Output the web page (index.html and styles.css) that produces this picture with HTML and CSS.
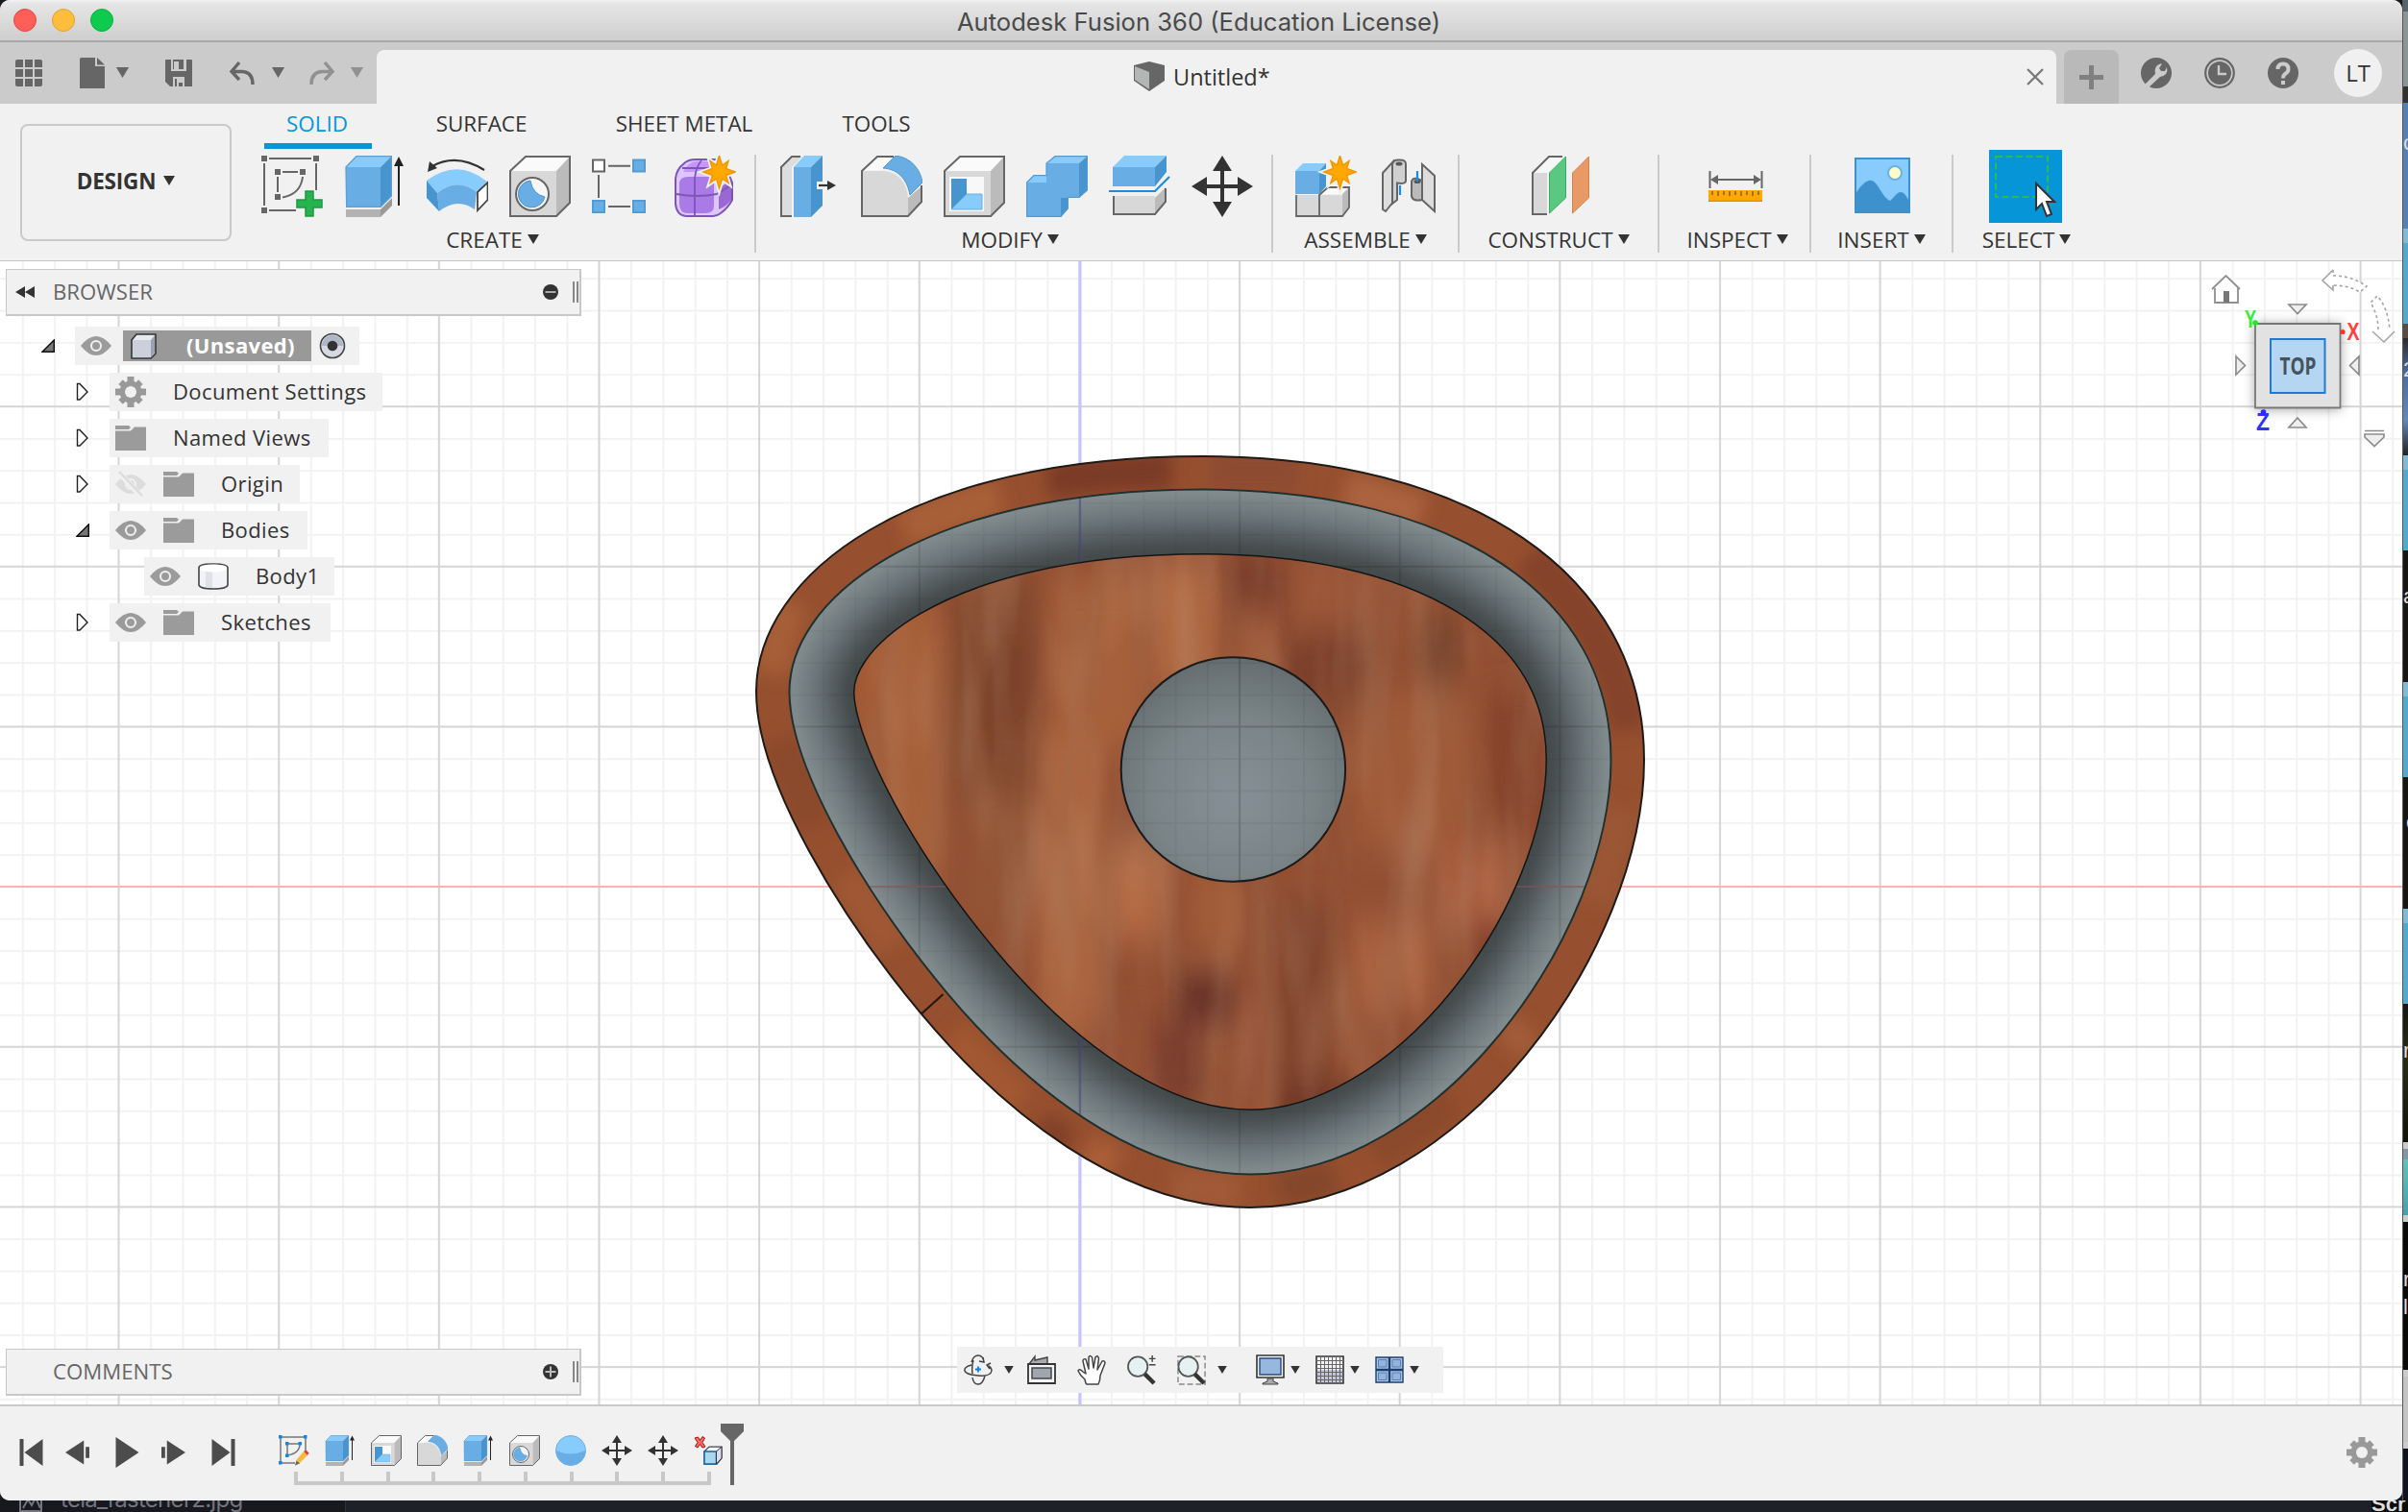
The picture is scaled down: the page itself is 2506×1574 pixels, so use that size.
FILE: index.html
```html
<!DOCTYPE html>
<html lang="en">
<head>
<meta charset="utf-8">
<title>Autodesk Fusion 360</title>
<link rel="stylesheet" href="styles.css">
</head>
<body>
<svg class="defs" width="0" height="0">
  <defs>
    <symbol id="i-sketch" viewBox="0 0 64 64">
      <path d="M8 3H52M3 8V52M57 8V36M8 57H36M22 17H38M17 22V38M43 22Q41 40 22 43.500" fill="none" stroke="#666" stroke-width="2"/>
      <path d="M0 0h6v6H0zM54 0h6v6h-6zM0 54h6v6H0zM14 14h6v6h-6zM40 14h6v6h-6zM14 40h6v6h-6z" fill="#666"/>
      <path d="M46 37h8v9h9v8h-9v9h-8v-9h-9v-8h9z" fill="#27b34f" stroke="#1b9a3f" stroke-width="1.500"/>
    </symbol>
    <symbol id="i-tsketch" viewBox="0 0 64 64">
      <path d="M4 4H56V36M4 4V58H34M18 18H44M18 18V42M44 18Q44 38 18 42" fill="none" stroke="#777" stroke-width="3"/>
      <path d="M0 0h7v7H0zM52 0h7v7h-7zM0 54h7v7H0zM14 14h7v7h-7zM41 14h7v7h-7zM14 39h7v7h-7z" fill="#1287e0"/>
      <path d="M34 63L38 50 52 34 60 42 44 58z" fill="#f5ba3f"/><path d="M34 63l3-10 7 6z" fill="#666"/><path d="M52 34l5-3 6 6-3 5z" fill="#e8372c"/>
    </symbol>
    <symbol id="i-extrude" viewBox="0 0 64 64">
      <path d="M2 12H38V54H2z" fill="#68aee4"/><path d="M2 12L13 0H50L38 12z" fill="#88cbfd"/><path d="M38 12L50 0V42L38 54z" fill="#4794ce"/>
      <path d="M2 12L13 .7H49.300V42L38 53.300H2.700z" fill="none" stroke="#5c9fd3" stroke-width="1.300"/>
      <path d="M2 56H38V64H2z" fill="#b2b2b2"/><path d="M38 56L50 44V52L38 64z" fill="#999"/>
      <path d="M57 8V52" stroke="#222" stroke-width="2"/><path d="M52 11L57 1l5 10z" fill="#222"/>
    </symbol>
    <symbol id="i-revolve" viewBox="0 0 64 64">
      <path d="M6 11Q31-3 60 15" fill="none" stroke="#333" stroke-width="2.200"/><path d="M1 17L3 6l8 7z" fill="#333"/>
      <path d="M0 26Q32 2 63 27L52 38Q32 22 11 39z" fill="#88cbfd"/>
      <path d="M11 39Q32 22 52 38L50 56Q32 43 13 58z" fill="#68aee4"/><path d="M0 26L11 39l2 19L0 44z" fill="#4794ce"/>
      <path d="M53 38L63.500 28V46L53 57z" fill="#fff" stroke="#444" stroke-width="1.800"/>
    </symbol>
    <symbol id="i-box" viewBox="0 0 64 64">
      <path d="M1 16H49V63H1z" fill="#d8d8d8"/><path d="M1 16L17 1H63L49 16z" fill="#fafafa"/><path d="M49 16L63 1V49L49 63z" fill="#bbb"/>
      <path d="M1 16L17 1H63V49L49 63H1z" fill="none" stroke="#666" stroke-width="2"/>
    </symbol>
    <symbol id="i-hole" viewBox="0 0 64 64">
      <use href="#i-box"/><circle cx="24" cy="40" r="17" fill="#f6f6f6" stroke="#666" stroke-width="2"/>
      <path d="M22 26Q24 40 37 43A14 14 0 1 1 22 26z" fill="#68aee4" stroke="#4b93cb"/>
    </symbol>
    <symbol id="i-pattern" viewBox="0 0 64 64">
      <path d="M17 10.700H40M17 53H40M7 20V44" stroke="#666" stroke-width="2"/>
      <path d="M1 4.500h12v12H1z" fill="#fff" stroke="#666" stroke-width="2"/>
      <path d="M43 4.500h12v12H43zM1 47h12v12H1zM43 47h12v12H43z" fill="#68aee4" stroke="#529bd3" stroke-width="2"/>
    </symbol>
    <symbol id="i-star" viewBox="0 0 64 64">
      <path d="M46.500 0L49.500 10 56 5.500 53.500 13.500 63 17 53.500 20.500 56 28.500 49.500 24 46.500 34 43.500 24 37 28.500 39.500 20.500 30 17 39.500 13.500 37 5.500 43.500 10z" fill="#ffa800" stroke="#ee9700" stroke-width="1.500"/>
    </symbol>
    <symbol id="i-form" viewBox="0 0 64 64">
      <path d="M1 24Q2 14 10 8Q14 4 22 4H46Q52 8 60 28V46Q56 54 48 60Q44 63 40 63H12Q2 62 1 50z" fill="#dcc6fb" stroke="#7d55b8" stroke-width="2"/>
      <path d="M5 28Q6 22 14 22H34Q41 22 41 30V52Q41 60 32 60H14Q5 60 5 50z" fill="#aa7be6"/>
      <path d="M9 17Q14 7 22 6H42L35 17z" fill="#c597fb"/><path d="M46 38Q46 32 59 26V46Q54 53 46 56z" fill="#9a68d3"/>
      <path d="M2 40Q24 44 44 40L60 30M21 62V24Q22 12 28 5M8 13H40" fill="none" stroke="#7d55b8" stroke-width="1.800"/>
      <path d="M46.500 0L49.500 10 56 5.500 53.500 13.500 63 17 53.500 20.500 56 28.500 49.500 24 46.500 34 43.500 24 37 28.500 39.500 20.500 30 17 39.500 13.500 37 5.500 43.500 10z" fill="#f1f1f1" stroke="#f1f1f1" stroke-width="5"/>
      <use href="#i-star"/>
    </symbol>
    <symbol id="i-press" viewBox="0 0 64 64">
      <path d="M3 12L14 1H25L14 12V63H3z" fill="#ddd"/><path d="M14 63H3V12L14 1H23" fill="none" stroke="#666" stroke-width="2"/>
      <path d="M16 12H34V64H16z" fill="#68aee4"/><path d="M16 12L27 0H46L34 12z" fill="#88cbfd"/><path d="M34 12L46 0V52L34 64z" fill="#4794ce"/>
      <path d="M40 27h11v-4l12 8-12 8v-4H40z" fill="#f1f1f1"/><path d="M42 31h12" stroke="#333" stroke-width="2.200"/><path d="M51 26l9 5-9 5z" fill="#333"/>
    </symbol>
    <symbol id="i-fillet" viewBox="0 0 64 64">
      <path d="M1 16L17 1H34L22 15z" fill="#fafafa"/><path d="M49 44L63 32V48L49 63z" fill="#bbb"/>
      <path d="M1 16H22C38 16 48 28 49 44V63H1z" fill="#d8d8d8"/><path d="M34 1H17L1 16V63H49L63 48V31" fill="none" stroke="#666" stroke-width="2"/>
      <path d="M23 13L36 0C52 2 62 14 64 28L51 41C48 24 38 14 23 13z" fill="#68aee4" stroke="#5299d0"/>
    </symbol>
    <symbol id="i-shell" viewBox="0 0 64 64">
      <use href="#i-box"/><path d="M6 22H42V58H6z" fill="#f8f8f8"/><path d="M8 24H24V40L8 56z" fill="#4794ce"/><path d="M24 40H40V56H8z" fill="#88cbfd" stroke="#68aee4"/>
    </symbol>
    <symbol id="i-combine" viewBox="0 0 64 64">
      <path d="M0 28L8 20H21V8H55V44H36V64H0z" fill="#68aee4"/><path d="M0 28L8 20H21V28zM21 8L30 0H64L55 8z" fill="#88cbfd"/>
      <path d="M55 8L64 0V36L55 44zM36 44H44V55L36 64z" fill="#4794ce"/>
      <path d="M.7 28L8 20.700H21V8L30 .7H63.300V36L55 43.300H43.300V55L36 63.300H.7z" fill="none" stroke="#559bd2" stroke-width="1.200"/>
    </symbol>
    <symbol id="i-split" viewBox="0 0 64 64">
      <path d="M4 12H48V32H4z" fill="#68aee4"/><path d="M4 12L16 0H60L48 12z" fill="#88cbfd"/><path d="M48 12L60 0V17L48 32z" fill="#4794ce"/>
      <path d="M0 37H48L63 22" fill="none" stroke="#1a8de0" stroke-width="2.200"/>
      <path d="M5 42H48V61H5z" fill="#d8d8d8"/><path d="M48 44L59 33V48L48 61z" fill="#bbb"/><path d="M5 42V61H48L59 48V34" fill="none" stroke="#666" stroke-width="2"/>
    </symbol>
    <symbol id="i-move" viewBox="0 0 64 64">
      <path d="M32 10V54M10 32H54" stroke="#333" stroke-width="4"/><path d="M32 0L42 16H22zM32 64L42 48H22zM0 32L16 22V42zM64 32L48 22V42z" fill="#333"/>
    </symbol>
    <symbol id="i-assemble" viewBox="0 0 64 64">
      <path d="M0 16H25V40H0z" fill="#68aee4"/><path d="M0 16L8 8H32L25 16z" fill="#88cbfd"/><path d="M25 16L32 8V32L25 40z" fill="#4794ce"/>
      <path d="M1 41H49V63H1z" fill="#d8d8d8"/><path d="M26 40L34 33H55L49 40z" fill="#fafafa"/><path d="M49 40L56 33V54L49 63z" fill="#bbb"/>
      <path d="M1 41V63H49L56 54V33H34L25 41V63" fill="none" stroke="#666" stroke-width="1.800"/>
      <path d="M46.500 0L49.500 10 56 5.500 53.500 13.500 63 17 53.500 20.500 56 28.500 49.500 24 46.500 34 43.500 24 37 28.500 39.500 20.500 30 17 39.500 13.500 37 5.500 43.500 10z" fill="#f1f1f1" stroke="#f1f1f1" stroke-width="5"/><use href="#i-star"/>
    </symbol>
    <symbol id="i-joint" viewBox="0 0 64 64">
      <path d="M5 18L16 6V48L8 58 5 56z" fill="#ddd" stroke="#666" stroke-width="2"/>
      <path d="M15 9Q16 4 22 4.500Q29 4 29 9V26Q29 30 20 28.500V46L15 50z" fill="#d0d0d0" stroke="#666" stroke-width="2"/><ellipse cx="22" cy="8.500" rx="3.500" ry="2" fill="#555"/>
      <path d="M46 9L59 21V58L46 46z" fill="#ddd" stroke="#666" stroke-width="2"/>
      <path d="M35 27Q36 23 41 24L46 26V46Q36 48 35 42z" fill="#bbb" stroke="#666" stroke-width="2"/><ellipse cx="41" cy="27" rx="3.500" ry="2" fill="#555"/>
      <path d="M23 31V41M41 16V27" stroke="#1a8de0" stroke-width="2.200"/>
    </symbol>
    <symbol id="i-construct" viewBox="0 0 64 64">
      <path d="M3 18L20 1H36L18 18V61H3z" fill="#f6f6f6"/><path d="M3 18H18V61H3z" fill="#d8d8d8"/><path d="M18 61H3V18L20 1H34" fill="none" stroke="#666" stroke-width="2"/>
      <path d="M20.500 18L37.500 1V44L20.500 60z" fill="#5bc881" stroke="#3cae64"/><path d="M44.500 18L61.500 1V44L44.500 60z" fill="#e79a66" stroke="#d18450"/>
    </symbol>
    <symbol id="i-inspect" viewBox="0 0 64 64">
      <path d="M5.500 16V34M59.500 16V34M9 25H56" stroke="#666" stroke-width="2"/><path d="M6 25l8-5v10zM59 25l-8-5v10z" fill="#666"/>
      <path d="M4 36H60V48H4z" fill="#ffa800"/><path d="M4 46.500H60V48H4z" fill="#e29100"/><path d="M8 37v4M14 37v5M20 37v4M26 37v5M32 37v4M38 37v5M44 37v4M50 37v5M56 37v4" stroke="#8a6420" stroke-width="1.600"/>
    </symbol>
    <symbol id="i-insert" viewBox="0 0 64 64">
      <path d="M4 3H60V59H4z" fill="#88cbfd" stroke="#3d91cd" stroke-width="2"/><circle cx="45" cy="18" r="7" fill="#fdfbc8" stroke="#6cb2e8" stroke-width="2"/>
      <path d="M4 40C10 30 16 25 21 26C28 28 32 44 40 47C44 44 47 38 51 38C55 38 58 44 60 48V59H4z" fill="#3d91cd"/>
    </symbol>
    <symbol id="i-sphere" viewBox="0 0 64 64">
      <circle cx="32" cy="32" r="31" fill="#88cbfd"/><path d="M1 32Q32 46 63 32A31 31 0 0 1 1 32z" fill="#68aee4"/><circle cx="32" cy="32" r="31" fill="none" stroke="#6db0e4" stroke-width="2"/>
    </symbol>
    <symbol id="i-remove" viewBox="0 0 64 64">
      <path d="M2 6l7-2 4 7 5-8 5 3-5 9 6 9-6 2-5-7-5 7-5-3 5-8z" fill="#f46a60" stroke="#a8120c" stroke-width="2"/>
      <path d="M22 34L32 24H58V48L48 60H22z" fill="#f6f6f6" stroke="#445" stroke-width="2.500"/><path d="M22 34H47V60H22z" fill="#a9d7ee" stroke="#1766a5" stroke-width="3"/><path d="M47 34L58 24V48L47 60z" fill="#dde" stroke="#334" stroke-width="2"/>
    </symbol>
    <symbol id="i-eye" viewBox="0 0 32 20">
      <path d="M0 10Q8 0 16 0T32 10Q24 20 16 20T0 10z" fill="#9b9b9b"/><circle cx="16" cy="10" r="5" fill="none" stroke="#f1f1f1" stroke-width="2"/>
    </symbol>
    <symbol id="i-folder" viewBox="0 0 32 26">
      <path d="M0 0H14L16 2 14 4H0zM0 5.500H16L20 1.500H32V26H0z" fill="#9b9b9b"/>
    </symbol>
    <symbol id="i-gear" viewBox="0 0 32 32">
      <g fill="#999"><path d="M12.500 0h7v32h-7zM0 12.500h32v7H0z"/><path d="M12.500 0h7v32h-7zM0 12.500h32v7H0z" transform="rotate(45 16 16) translate(1.300 1.300) scale(.92)"/><circle cx="16" cy="16" r="11.500"/></g><circle class="gear-hole" cx="16" cy="16" r="6"/>
    </symbol>
    <symbol id="i-open" viewBox="0 0 14 14"><path d="M1 13.300L13.300 1V13.300z" fill="#777" stroke="#111" stroke-width="1.500"/></symbol>
    <symbol id="i-closed" viewBox="0 0 14 20"><path d="M1.500 1.500H4L12 10 4 18H1.500z" fill="#fff" stroke="#222" stroke-width="1.400"/></symbol>
    <symbol id="i-down" viewBox="0 0 12 10"><path d="M0 0H12L6 10z" fill="currentColor"/></symbol>
  </defs>
</svg>

<div class="desktop">
  <div class="window">
    <header class="titlebar">
      <div class="lights"><i class="red"></i><i class="yellow"></i><i class="green"></i></div>
      <span class="title">Autodesk Fusion 360 (Education License)</span>
    </header>

    <div class="appbar">
      <div class="quick">
        <svg class="q-grid" viewBox="0 0 28 28"><path d="M0 2Q0 0 2 0H8V8H0zM10 0H18V8H10zM20 0H26Q28 0 28 2V8H20zM0 10H8V18H0zM10 10H18V18H10zM20 10H28V18H20zM0 20H8V28H2Q0 28 0 26zM10 20H18V28H10zM20 20H28V26Q28 28 26 28H20z" fill="#666"/></svg>
        <svg class="q-doc" viewBox="0 0 26 32"><path d="M0 1.500Q0 0 1.500 0H16V9H26V32H0zM18 0L26 7.500H18z" fill="#666"/></svg>
        <svg class="q-arrow"><use href="#i-down"/></svg>
        <svg class="q-save" viewBox="0 0 28 28"><path d="M0 1Q0 0 1 0H27Q28 0 28 1V28H5L0 23z" fill="#666"/><path d="M6 0V12H22V0H19V10H14V2H9V10H8V0zM8 28V18H20V28H18V24H14V28H12V20H10V28z" fill="#cbcbcb"/></svg>
        <svg class="q-undo" viewBox="0 0 27 25"><path d="M10 1L2 10.500 10 19M2 10.500H13Q24 11 24 24" fill="none" stroke="#666" stroke-width="3.400"/></svg>
        <svg class="q-arrow"><use href="#i-down"/></svg>
        <svg class="q-redo" viewBox="0 0 27 25"><path d="M17 1L25 10.500 17 19M25 10.500H14Q3 11 3 24" fill="none" stroke="#919191" stroke-width="3.400"/></svg>
        <svg class="q-arrow dim"><use href="#i-down"/></svg>
      </div>
      <div class="doc-tab">
        <svg class="cube" viewBox="0 0 32 32"><path d="M0 4L16 0 32 4V20L16 31 0 20z" fill="#666"/><path d="M1 5L16 11V29L1 19z" fill="#b4b6b6"/></svg>
        <span>Untitled*</span>
        <svg class="close" viewBox="0 0 18 18"><path d="M1 1L17 17M17 1L1 17" stroke="#777" stroke-width="2.200"/></svg>
      </div>
      <div class="new-tab"><svg viewBox="0 0 25 25"><path d="M12.500 0V25M0 12.500H25" stroke="#808080" stroke-width="5"/></svg></div>
      <div class="account">
        <svg viewBox="0 0 32 32"><circle cx="16" cy="16" r="16" fill="#666"/><path d="M3 29L15 17Q13 9 20 6.500L22 6.500 19 11 21 14 25 14 27 10Q29 18 20 20L7 32z" fill="#cbcbcb"/></svg>
        <svg viewBox="0 0 32 32"><circle cx="16" cy="16" r="14.800" fill="none" stroke="#666" stroke-width="2.200"/><circle cx="16" cy="16" r="12" fill="#666"/><path d="M15 8V17H23" fill="none" stroke="#cbcbcb" stroke-width="2.400"/></svg>
        <svg viewBox="0 0 32 32"><circle cx="16" cy="16" r="16" fill="#666"/><path d="M10.500 12Q10.500 6.500 16 6.500T21.500 12Q21.500 15 18 17Q16 18.500 16 21.500" fill="none" stroke="#cbcbcb" stroke-width="4"/><path d="M14 24h4v4h-4z" fill="#cbcbcb"/></svg>
        <span class="avatar">LT</span>
      </div>
    </div>

    <div class="ribbon">
      <button class="design">DESIGN<svg class="dd"><use href="#i-down"/></svg></button>
      <div class="ribbon-main">
        <nav class="tabs"><span class="tab t-solid">SOLID</span><span class="tab t-surface">SURFACE</span><span class="tab t-sheet">SHEET METAL</span><span class="tab t-tools">TOOLS</span></nav>
        <div class="groups">
          <section class="group g-create"><div class="icons"><svg><use href="#i-sketch"/></svg><svg><use href="#i-extrude"/></svg><svg><use href="#i-revolve"/></svg><svg><use href="#i-hole"/></svg><svg><use href="#i-pattern"/></svg><svg><use href="#i-form"/></svg></div><div class="label">CREATE<svg class="dd"><use href="#i-down"/></svg></div></section>
          <section class="group g-modify"><div class="icons"><svg><use href="#i-press"/></svg><svg><use href="#i-fillet"/></svg><svg><use href="#i-shell"/></svg><svg><use href="#i-combine"/></svg><svg><use href="#i-split"/></svg><svg><use href="#i-move"/></svg></div><div class="label">MODIFY<svg class="dd"><use href="#i-down"/></svg></div></section>
          <section class="group g-assemble"><div class="icons"><svg><use href="#i-assemble"/></svg><svg><use href="#i-joint"/></svg></div><div class="label">ASSEMBLE<svg class="dd"><use href="#i-down"/></svg></div></section>
          <section class="group g-construct"><div class="icons"><svg><use href="#i-construct"/></svg></div><div class="label">CONSTRUCT<svg class="dd"><use href="#i-down"/></svg></div></section>
          <section class="group g-inspect"><div class="icons"><svg><use href="#i-inspect"/></svg></div><div class="label">INSPECT<svg class="dd"><use href="#i-down"/></svg></div></section>
          <section class="group g-insert"><div class="icons"><svg><use href="#i-insert"/></svg></div><div class="label">INSERT<svg class="dd"><use href="#i-down"/></svg></div></section>
          <section class="group g-select"><div class="icons"><svg class="select" viewBox="0 0 76 76"><path d="M0 0H76V76H0z" fill="#0696d7"/><path d="M7 7H61V49H7z" fill="none" stroke="#2dbb4e" stroke-width="2" stroke-dasharray="7 3.500"/><path d="M49 35V62L55 56 60 69 65 67 60 54H68z" fill="#fff" stroke="#333" stroke-width="2"/></svg></div><div class="label">SELECT<svg class="dd"><use href="#i-down"/></svg></div></section>
        </div>
      </div>
    </div>

    <main class="canvas">
      <svg class="scene" viewBox="0 272 2500 1190">
        <defs>
          <pattern id="minor" x="1122.700" y="922.500" width="33.330" height="33.330" patternUnits="userSpaceOnUse"><path d="M0 0H33.330V2H0zM0 0H2V33.330H0z" fill="#000" fill-opacity=".05"/></pattern>
          <pattern id="major" x="1122.300" y="922" width="166.640" height="166.640" patternUnits="userSpaceOnUse"><path d="M0 0H166.640V2H0zM0 0H2V166.640H0z" fill="#000" fill-opacity=".12"/></pattern>
          <path id="outline" d="M1252 475C1527 475 1711 596 1711 791C1711 988 1520 1257 1301 1257C1165 1257 1042 1155 958.800 1055.400C875.500 955.700 787 813 787 720C787 598 947 475 1252 475z"/>
          <clipPath id="body-clip"><use href="#outline"/></clipPath>
          <mask id="ring-mask" maskUnits="userSpaceOnUse" x="700" y="400" width="1100" height="950"><use href="#outline" fill="none" stroke="#fff" stroke-width="202"/></mask>
          <mask id="rim-mask" maskUnits="userSpaceOnUse" x="700" y="400" width="1100" height="950"><use href="#outline" fill="none" stroke="#fff" stroke-width="67"/></mask>
          <filter id="soft" x="-20%" y="-20%" width="140%" height="140%"><feGaussianBlur stdDeviation="4"/></filter>
          <filter id="rim-soft" filterUnits="userSpaceOnUse" x="700" y="400" width="1100" height="950"><feGaussianBlur stdDeviation="9"/></filter>
          <filter id="smudge" filterUnits="userSpaceOnUse" x="700" y="400" width="1100" height="950"><feGaussianBlur stdDeviation="10 18"/></filter>
          <filter id="grain" x="0" y="0" width="100%" height="100%"><feTurbulence type="fractalNoise" baseFrequency=".03 .005" numOctaves="3" seed="8"/><feColorMatrix values="0 0 0 0 .34  0 0 0 0 .17  0 0 0 0 .10  2.600 0 0 0 -1.100"/></filter>
          <filter id="glow" x="0" y="0" width="100%" height="100%"><feTurbulence type="fractalNoise" baseFrequency=".024 .006" numOctaves="2" seed="23"/><feColorMatrix values="0 0 0 0 .75  0 0 0 0 .47  0 0 0 0 .29  2 0 0 0 -.900"/></filter>
          <radialGradient id="disc" cx=".5" cy=".62" r=".64"><stop offset="0" stop-color="#858f96"/><stop offset=".55" stop-color="#7b8588"/><stop offset="1" stop-color="#636b6d"/></radialGradient>
          <filter id="shadow" x="-30%" y="-30%" width="160%" height="160%"><feDropShadow dx="0" dy="1" stdDeviation="6" flood-opacity=".35"/></filter>
        </defs>
        <path d="M0 272H2500V1462H0z" fill="#fff"/>
        <path d="M0 272H2500V1462H0z" fill="url(#minor)"/>
        <path d="M0 272H2500V1462H0z" fill="url(#major)"/>
        <path d="M0 923H2500" stroke="#ffb0b0" stroke-width="2"/>
        <path d="M1124 272V1462" stroke="#c6c4fb" stroke-width="3"/>

        <g clip-path="url(#body-clip)">
          <path d="M780 470H1720V1260H780z" fill="#935033"/>
          <g filter="url(#smudge)">
            <path d="M890 620H975V950H890z" fill="#a45d38"/>
            <path d="M960 650H982V900H960z" fill="#a8643c"/>
            <path d="M990 600H1080V830H990z" fill="#834a2e"/>
            <path d="M1020 660H1070V770H1020z" fill="#7b422a"/>
            <path d="M1095 600H1190V780H1095z" fill="#a6613b"/>
            <path d="M1100 820H1135V900H1100z" fill="#b36c45"/>
            <path d="M1200 590H1265V720H1200z" fill="#b0673f"/>
            <path d="M1275 575H1335V640H1275z" fill="#7c3d2a"/>
            <path d="M1290 640H1325V710H1290z" fill="#a35a37"/>
            <path d="M1335 660H1425V740H1335z" fill="#7d3f29"/>
            <path d="M1350 580H1440V650H1350z" fill="#9c5637"/>
            <path d="M1475 640H1520V710H1475z" fill="#78432a"/>
            <path d="M1410 720H1530V880H1410z" fill="#9f5a37"/>
            <path d="M1550 720H1630V860H1550z" fill="#86422a"/>
            <path d="M1500 880H1580V960H1500z" fill="#a65a3b"/>
            <path d="M1535 960H1600V1060H1535z" fill="#803c29"/>
            <path d="M1080 760H1150V1090H1080z" fill="#aa6540"/>
            <path d="M1010 830H1070V960H1010z" fill="#935435"/>
            <path d="M1160 880H1215V980H1160z" fill="#b0663f"/>
            <path d="M1240 900H1290V990H1240z" fill="#a05b38"/>
            <path d="M1225 1015H1285V1065H1225z" fill="#5f2c20"/>
            <path d="M1200 1060H1250V1150H1200z" fill="#7a3a2a"/>
            <path d="M1330 940H1385V1200H1330z" fill="#81442d"/>
            <path d="M1295 1030H1320V1130H1295z" fill="#98533a"/>
            <path d="M1410 960H1490V1050H1410z" fill="#a9623f"/>
            <path d="M1330 1130H1410V1220H1330z" fill="#6f3728"/>
            <path d="M1130 1060H1195V1150H1130z" fill="#955136"/>
          </g>
          <path d="M780 470H1720V1260H780z" filter="url(#grain)" opacity=".28"/>
          <path d="M780 470H1720V1260H780z" filter="url(#glow)" opacity=".22"/>
          <use href="#outline" fill="none" stroke="#141414" stroke-width="205"/>
          <g mask="url(#ring-mask)">
            <path d="M780 470H1720V1260H780z" fill="#434a4b"/>
            <g fill="none" filter="url(#soft)">
              <use href="#outline" stroke="#474e50" stroke-width="192"/>
              <use href="#outline" stroke="#4d5456" stroke-width="180"/>
              <use href="#outline" stroke="#545c5e" stroke-width="168"/>
              <use href="#outline" stroke="#5b6466" stroke-width="156"/>
              <use href="#outline" stroke="#626b6e" stroke-width="144"/>
              <use href="#outline" stroke="#697376" stroke-width="132"/>
              <use href="#outline" stroke="#70797c" stroke-width="120"/>
              <use href="#outline" stroke="#768083" stroke-width="106"/>
              <use href="#outline" stroke="#7c8689" stroke-width="92"/>
              <use href="#outline" stroke="#818c8f" stroke-width="80"/>
            </g>
            <g opacity=".7"><path d="M780 470H1720V1260H780z" fill="url(#minor)"/><path d="M780 470H1720V1260H780z" fill="url(#major)"/></g>
            <path d="M1124.200 470V1260" stroke="#46489a" stroke-width="2" opacity=".5"/><path d="M780 923H1720" stroke="#9a5a5c" stroke-width="2" opacity=".5"/>
          </g>
          <use href="#outline" fill="none" stroke="#20302f" stroke-width="71"/>
          <use href="#outline" fill="none" stroke="#96502f" stroke-width="67"/>
          <g mask="url(#rim-mask)">
            <g filter="url(#rim-soft)" fill="none" stroke-width="40"><path d="M1090 500Q1150 490 1220 490" stroke="#7a3b27"/><path d="M1260 491H1350" stroke="#8d4c30"/><path d="M940 550L1040 515" stroke="#a86039"/><path d="M1400 510L1480 535" stroke="#ab643f"/><path d="M1590 580Q1680 660 1695 760" stroke="#84432a"/><path d="M820 625L800 700" stroke="#a65f38"/><path d="M810 770L850 860" stroke="#8a482c"/><path d="M880 910L930 985" stroke="#9f5935"/><path d="M990 1080L1060 1150" stroke="#a35833"/><path d="M1080 1175L1110 1195" stroke="#803f28"/><path d="M1130 1200L1160 1215" stroke="#aa5f39"/><path d="M1220 1235L1290 1242" stroke="#a05a37"/><path d="M1330 1240L1390 1225" stroke="#84462b"/><path d="M1430 1200L1510 1145" stroke="#8a4a2c"/><path d="M1570 1090L1590 1070" stroke="#a35d3a"/><path d="M1660 940L1690 840" stroke="#9a5635"/></g>
          </g>
        </g>
        <use href="#outline" fill="none" stroke="#1d1a18" stroke-width="2"/>
        <path d="M958.800 1055.400L981.500 1035" stroke="#201510" stroke-width="2"/>
        <circle cx="1283.400" cy="801" r="116.700" fill="url(#disc)"/><circle cx="1283.400" cy="801" r="116.700" fill="url(#minor)"/><circle cx="1283.400" cy="801" r="116.700" fill="url(#major)"/>
        <circle cx="1283.400" cy="801" r="116.700" fill="none" stroke="#1a1a1a" stroke-width="2"/>

        <g class="viewcube">
          <path d="M2302 301L2316.500 287 2331 301M2305 300V315H2329V300" fill="#fff" stroke="#909090" stroke-width="1.800"/><path d="M2314 303H2320V315H2314z" fill="#777"/>
          <path d="M2347 337H2435.500V424.500H2347z" fill="#e2e2e2" stroke="#777" stroke-width="1.800" filter="url(#shadow)"/>
          <path d="M2363 353H2419.500V409H2363z" fill="#b4d6f2" stroke="#2179d0" stroke-width="2"/>
          <text x="2372.500" y="389.500" class="vc-top" textLength="38" lengthAdjust="spacingAndGlyphs">TOP</text>
          <text x="2336" y="341" class="vc-axis vc-y" textLength="12" lengthAdjust="spacingAndGlyphs">Y</text><circle cx="2347" cy="336" r="2.800" fill="#18f018"/>
          <text x="2442.500" y="353.500" class="vc-axis vc-x" textLength="13" lengthAdjust="spacingAndGlyphs">X</text><circle cx="2438" cy="345.500" r="2.600" fill="#ff3030"/>
          <text x="2348" y="447.500" class="vc-axis vc-z" textLength="14" lengthAdjust="spacingAndGlyphs">Z</text><circle cx="2355.500" cy="429" r="2.800" fill="#2828ff"/>
          <g fill="#eee" stroke="#8c8c8c" stroke-width="1.700"><path d="M2382 317H2400L2391 326.500zM2382 445H2400L2391 435zM2327 371V390L2336.500 380.500zM2455 371V390L2445.500 380.500z"/><path d="M2461 448.500H2481M2461 452H2481V455L2471 464.500 2461 455z"/></g>
          <g fill="#fff" stroke="#a5a5a5" stroke-width="1.600"><path d="M2428 281L2417 292 2428 302V297"/><path d="M2428 281V287Q2447 287 2463 298L2456 304Q2444 297 2428 297" stroke-dasharray="3 3"/><path d="M2475 343Q2475 328 2467 315L2474 308Q2485 320 2487 343" stroke-dasharray="3 3"/><path d="M2469 345L2481 356 2492 345" fill="none"/></g>
        </g>
      </svg>

      <aside class="side">
        <div class="panel-head">
          <svg class="rewind" viewBox="0 0 20 12"><path d="M10 0V12L0 6zM20 0V12L10 6z" fill="#333"/></svg>
          <span>BROWSER</span>
          <svg class="toggle" viewBox="0 0 16 16"><circle cx="8" cy="8" r="8" fill="#333"/><path d="M2.500 8H13.500" stroke="#aaa" stroke-width="2"/></svg><i class="grip"></i>
        </div>
        <ul class="tree">
          <li class="root"><svg class="tw"><use href="#i-open"/></svg><div class="node"><svg class="eye"><use href="#i-eye"/></svg><span class="current"><svg class="comp" viewBox="0 0 28 28"><path d="M1 8L6 2H26V22L21 27H1z" fill="#e8eaf0" stroke="#333" stroke-width="1.600" stroke-linejoin="round"/><path d="M2 8H21V26H2z" fill="#ccd0da"/><path d="M21 8L25 3V21L21 26z" fill="#9aa2b4"/></svg><em>(Unsaved)</em></span><svg class="radio" viewBox="0 0 28 28"><circle cx="14" cy="14" r="12.500" fill="#d5d9e2" stroke="#444" stroke-width="1.600"/><path d="M3 14A11 11 0 0 1 25 14z" fill="#b0b7c7"/><circle cx="14" cy="14" r="5.300" fill="#333"/></svg></div></li>
          <li class="l1"><svg class="tw c"><use href="#i-closed"/></svg><div class="node n-doc"><svg class="gear"><use href="#i-gear"/></svg><b>Document Settings</b></div></li>
          <li class="l1"><svg class="tw c"><use href="#i-closed"/></svg><div class="node n-views"><svg class="folder"><use href="#i-folder"/></svg><b>Named Views</b></div></li>
          <li class="l1"><svg class="tw c"><use href="#i-closed"/></svg><div class="node n-origin"><svg class="eye off" viewBox="0 0 32 26"><path d="M0 13Q8 3 16 3T32 13Q24 23 16 23T0 13z" fill="#dcdcdc"/><circle cx="16" cy="13" r="5" fill="none" stroke="#f1f1f1" stroke-width="2"/><path d="M2 -1L28 27" stroke="#f1f1f1" stroke-width="6"/><path d="M4 0L28 25" stroke="#dcdcdc" stroke-width="2.400"/></svg><svg class="folder"><use href="#i-folder"/></svg><b>Origin</b></div></li>
          <li class="l1"><svg class="tw"><use href="#i-open"/></svg><div class="node n-bodies"><svg class="eye"><use href="#i-eye"/></svg><svg class="folder"><use href="#i-folder"/></svg><b>Bodies</b></div></li>
          <li class="l2"><div class="node n-body1"><svg class="eye"><use href="#i-eye"/></svg><svg class="cyl" viewBox="0 0 32 28"><path d="M1 5Q1 1 16 1T31 5V23Q30 27 16 27T1 23z" fill="#f2f3f6" stroke="#444" stroke-width="1.600"/><path d="M8 9H15V26L8 25z" fill="#dfe1e6"/><ellipse cx="16" cy="5.500" rx="14" ry="4" fill="#fff"/></svg><b>Body1</b></div></li>
          <li class="l1"><svg class="tw c"><use href="#i-closed"/></svg><div class="node n-sketches"><svg class="eye"><use href="#i-eye"/></svg><svg class="folder"><use href="#i-folder"/></svg><b>Sketches</b></div></li>
        </ul>
        <div class="panel-head comments">
          <span>COMMENTS</span>
          <svg class="toggle" viewBox="0 0 16 16"><circle cx="8" cy="8" r="8" fill="#333"/><path d="M2.500 8H13.500M8 2.500V13.500" stroke="#bbb" stroke-width="2"/></svg><i class="grip"></i>
        </div>
      </aside>

      <div class="navbar">
        <svg class="n1" viewBox="0 0 30 32"><g fill="none" stroke="#444" stroke-width="1.500"><path d="M8 8Q10 1 15 1T21 8M22 22Q20 31 15 31T9 24M9 20Q8 12 10 6M8 11Q0 13 1 17T15 22T29 17Q29 13 24 11M20 3L21 8 16 7M28 9L24 11 27 15"/></g><path d="M15 12.500V18.500M12 15.500H18" stroke="#0b7de0" stroke-width="1.800"/></svg>
        <svg class="na a1"><use href="#i-down"/></svg>
        <svg class="n2" viewBox="0 0 30 30"><path d="M2 9L8 1V5L21 2V8" fill="#aaa" stroke="#444" stroke-width="1.400"/><path d="M1 9H29V29H1z" fill="#f4f5f8" stroke="#333" stroke-width="1.800"/><path d="M5 13H25V24H5z" fill="#a0a6ae" stroke="#444" stroke-width="1.500"/></svg>
        <svg class="n3" viewBox="0 0 30 32"><path d="M9 30L8 26Q3 22 1 17Q2 14 6 18L9 20 6 7Q6 4 9 5L12 15 12 3Q13 0 15.500 3L17 14 19 3Q21 0 22.500 4L21 16 26 7Q29 6 29 9L24 22Q24 27 22 31H10z" fill="#fff" stroke="#444" stroke-width="1.500" stroke-linejoin="round"/></svg>
        <svg class="n4" viewBox="0 0 32 32"><circle cx="11.500" cy="12" r="10.500" fill="#e6f1f1" stroke="#555" stroke-width="1.800"/><path d="M19 20L29 30" stroke="#333" stroke-width="4.500"/><path d="M27 0V7M23.500 3.500H30.500M23.500 10H30.500" stroke="#444" stroke-width="1.500"/></svg>
        <svg class="n5" viewBox="0 0 32 32"><path d="M1 1H30V31H1z" fill="none" stroke="#888" stroke-width="1.500" stroke-dasharray="6 3"/><circle cx="12" cy="12" r="10.500" fill="#e6f1f1" stroke="#555" stroke-width="1.800"/><path d="M19 20L29 30" stroke="#333" stroke-width="4.500"/></svg>
        <svg class="na a2"><use href="#i-down"/></svg>
        <svg class="n6" viewBox="0 0 30 32"><path d="M1 1H29V24H1z" fill="#f4f5f8" stroke="#333" stroke-width="1.600"/><path d="M4 4H26V21H4z" fill="#96b8df" stroke="#2b4a80" stroke-width="1.400"/><path d="M12 25H18V28L23 30V31H7V30L12 28z" fill="#aaa" stroke="#444"/></svg>
        <svg class="na a3"><use href="#i-down"/></svg>
        <svg class="n7" viewBox="0 0 30 30"><path d="M1 1H29V29H1z" fill="#f2f3f6" stroke="#333" stroke-width="1.600"/><path d="M2 15H28V28H2z" fill="#c3c6d6"/><path d="M5.500 1V29M9.500 1V29M13.500 1V29M17.500 1V29M21.500 1V29M25.500 1V29M1 5.500H29M1 9.500H29M1 13.500H29M1 17.500H29M1 21.500H29M1 25.500H29" stroke="#666" stroke-width="1"/></svg>
        <svg class="na a3"><use href="#i-down"/></svg>
        <svg class="n8" viewBox="0 0 30 28"><path d="M1 1H14.500V13.500H1zM15.500 1H29V13.500H15.500zM1 14.500H14.500V27H1zM15.500 14.500H29V27H15.500z" fill="#a9c4e4" stroke="#1f3e70" stroke-width="1.400"/><path d="M3.500 3.500H12V11H3.500zM18 3.500H26.500V11H18zM3.500 17H12V24.500H3.500zM18 17H26.500V24.500H18z" fill="#93b4dc" stroke="#5b7cae"/></svg>
        <svg class="na a3"><use href="#i-down"/></svg>
      </div>
    </main>

    <footer class="timeline">
      <div class="playback">
        <svg viewBox="0 0 24 28"><path d="M0 0H4V28H0zM24 0V28L5 14z" fill="#4c4c4c"/></svg>
        <svg class="step" viewBox="0 0 26 28"><path d="M20 1V27L0 14z" fill="#4c4c4c"/><path d="M22 8H26V20H22z" fill="#4c4c4c"/></svg>
        <svg class="play" viewBox="0 0 24 32"><path d="M0 0L24 16 0 32z" fill="#4c4c4c"/></svg>
        <svg class="step" viewBox="0 0 26 28"><path d="M6 1V27L26 14z" fill="#4c4c4c"/><path d="M0 8H4V20H0z" fill="#4c4c4c"/></svg>
        <svg viewBox="0 0 24 28"><path d="M20 0H24V28H20zM0 0V28L19 14z" fill="#4c4c4c"/></svg>
      </div>
      <div class="history">
        <div class="features"><svg><use href="#i-tsketch"/></svg><svg><use href="#i-extrude"/></svg><svg><use href="#i-shell"/></svg><svg><use href="#i-fillet"/></svg><svg><use href="#i-extrude"/></svg><svg><use href="#i-hole"/></svg><svg><use href="#i-sphere"/></svg><svg><use href="#i-move"/></svg><svg><use href="#i-move"/></svg><svg><use href="#i-remove"/></svg></div>
        <div class="rail"><i></i><i></i><i></i><i></i><i></i><i></i><i></i><i></i><i></i><i></i></div>
      </div>
      <svg class="marker" viewBox="0 0 24 64"><path d="M0 0H24V8L14 18V64H10V18L0 8z" fill="#666"/></svg>
      <svg class="settings"><use href="#i-gear"/></svg>
    </footer>
  </div>

  <div class="strip">
    <i class="s1"></i><i class="s2"></i><i class="s3"></i><i class="s4"></i><i class="sky-top"></i><i class="sky"></i><i class="s5"></i><i class="s6"></i><i class="sky-top"></i><i class="sky"></i><i class="s7"></i><i class="sky-top"></i><i class="sky"></i><i class="s7"></i><i class="sky-top"></i><i class="sky"></i><i class="s8"></i><i class="frame"></i><i class="s9"></i><i class="s10"></i><i class="frame"></i><i class="s11"></i><i class="frame"></i><i class="s12"></i><i class="frame"></i><i class="s13"></i>
    <span class="frag f1">c</span><span class="frag f2">2</span><span class="frag f3">a</span><span class="frag f4">o</span><span class="frag f5">r</span><span class="frag f6">r</span><span class="frag f7">l</span>
  </div>
  <div class="dock">
    <div class="file"><svg viewBox="0 0 24 24"><path d="M1 0V23H23V0M4 20L9 11 13 17 17 9 22 20" fill="none" stroke="#73747e" stroke-width="2"/></svg><span>tela_fastener2.jpg</span></div>
    <span class="scr">Scr</span>
  </div>
</div>
</body>
</html>
```
FILE: styles.css
```css
* { box-sizing: border-box; }
html, body { margin: 0; }
body { width: 2506px; height: 1574px; overflow: hidden; font-family: "Open Sans", "Noto Sans", sans-serif; color: #333; }
svg { display: block; flex: none; overflow: visible; }
.defs { position: absolute; }
.desktop { width: 2506px; height: 1574px; display: grid; grid-template-columns: 2500px 6px; grid-template-rows: 1562px 12px; background: #17191f; position: relative; }
.window { display: flex; flex-direction: column; border-radius: 10px; overflow: hidden; background: #f1f1f1; z-index: 1; }

/* title bar */
.titlebar { height: 44px; display: grid; grid-template-columns: 200px 1fr 205px; align-items: center; background: linear-gradient(#f4f4f4 0, #e6e6e6 3px, #cecece 42px); border-bottom: 2px solid #a9a9a9; }
.lights { display: flex; gap: 16px; padding-left: 14px; }
.lights i { width: 24px; height: 24px; border-radius: 50%; border: 1px solid #e2463f; background: #ff5f57; }
.lights .yellow { background: #ffbd3e; border-color: #e0a030; }
.lights .green { background: #0dcb4c; border-color: #0fac3e; }
.title { font-family: Inter, sans-serif; font-size: 25.600px; color: #4a4a4a; text-align: center; white-space: nowrap; padding-top: 2px; }

/* application bar */
.appbar { height: 64px; display: flex; align-items: flex-end; background: #cbcbcb; }
.quick { width: 392px; height: 64px; display: flex; align-items: center; padding-left: 16px; }
.q-grid { width: 28px; height: 28px; margin-right: 39px; }
.q-doc { width: 26px; height: 32px; margin-right: 11px; }
.q-arrow { width: 15px; height: 11px; color: #666; margin-top: -2px; }
.q-save { width: 28px; height: 28px; margin: 0 39px 0 37px; }
.q-undo { width: 27px; height: 25px; margin-right: 16px; }
.q-redo { width: 27px; height: 25px; margin: 0 16px 0 24px; }
.q-arrow.dim { color: #919191; }
.doc-tab { width: 1748px; height: 56px; display: flex; align-items: center; padding: 0 13px 0 788px; background: #f1f1f1; border-radius: 8px 8px 0 0; font-size: 23.500px; font-weight: 500; }
.doc-tab span { margin-top: -1px; }
.cube { width: 32px; height: 32px; margin-right: 9px; }
.close { width: 18px; height: 18px; margin-left: auto; }
.new-tab { width: 57px; height: 56px; margin: 0 -1px 0 8px; background: #b9b9b9; border-radius: 8px 8px 0 0; display: flex; align-items: center; justify-content: center; }
.new-tab svg { width: 25px; height: 25px; }
.account { height: 64px; display: flex; align-items: center; gap: 34px; padding-left: 24px; }
.account svg { width: 32px; height: 32px; }
.avatar { width: 50px; height: 50px; border-radius: 50%; background: #f0f0f0; display: flex; align-items: center; justify-content: center; font-size: 24px; margin-left: 3px; padding-bottom: 2px; }

/* ribbon */
.ribbon { height: 164px; display: flex; background: #f1f1f1; border-bottom: 1px solid #c5c5c5; }
.design { width: 220px; height: 122px; margin: 21px -1px 0 21px; border: 2px solid #c9c9c9; border-radius: 8px; background: none; font: 700 22.500px "Open Sans", sans-serif; letter-spacing: -.2px; color: #333; display: flex; align-items: center; justify-content: center; padding: 0 0 4px; }
.dd { width: 12px; height: 10px; margin-left: 8px; color: #333; }
.tabs { height: 47px; display: flex; padding-left: 35px; }
.tab { height: 47px; text-align: center; font-size: 22.400px; line-height: 42px; white-space: nowrap; }
.t-solid { width: 112px; color: #0696d7; border-bottom: 6px solid #0696d7; padding-right: 2px; }
.t-surface { width: 120px; margin-left: 54px; }
.t-sheet { width: 180px; margin-left: 61px; }
.t-tools { width: 100px; margin-left: 60px; }
.groups { display: flex; height: 102px; margin-top: 6px; }
.group { border-right: 2px solid #cacaca; display: flex; flex-direction: column; position: relative; }
.icons { height: 66px; display: flex; gap: 22px; padding-top: 1px; }
.icons svg { width: 64px; height: 64px; }
.icons .select { width: 76px; height: 76px; margin-top: -6px; }
.label { height: 36px; display: flex; align-items: center; justify-content: center; font-size: 22.500px; padding-top: 8px; }
.label .dd { margin: -1px 0 0 5px; }
.g-create { width: 547px; } .g-create .icons { padding-left: 32px; }
.g-modify { width: 538px; } .g-modify .icons { padding-left: 23px; } .g-modify .label { padding-right: 8px; }
.g-assemble { width: 194px; } .g-assemble .icons { padding-left: 23px; }
.g-construct { width: 208px; } .g-construct .icons { padding-left: 73px; }
.g-inspect { width: 158px; } .g-inspect .icons { padding-left: 47px; } .g-inspect .label { padding-left: 6px; }
.g-insert { width: 148px; } .g-insert .icons { padding-left: 42px; }
.g-select { width: 152px; border: 0; } .g-select .icons { padding-left: 37px; }

/* modelling canvas */
.canvas { height: 1190px; position: relative; display: flex; }
.scene { position: absolute; inset: 0; width: 2500px; height: 1190px; overflow: hidden; }
.vc-top { font: 700 25px "Open Sans", sans-serif; fill: #46525e; }
.vc-axis { font: 700 25px "Liberation Sans", sans-serif; }
.vc-x { fill: #ff4040; } .vc-y { fill: #30f030; } .vc-z { fill: #3030ff; }
.side { position: relative; width: 600px; height: 1190px; margin-left: 6px; padding: 8px 0 9px; display: flex; flex-direction: column; }
.panel-head { width: 599px; height: 49px; flex: none; background: #f1f1f1; border: 1px solid #c8c8c8; border-width: 1px 2px 2px 1px; display: flex; align-items: center; font-size: 22.200px; color: #666; padding-left: 9px; }
.panel-head span { margin-top: -2px; }
.rewind { width: 20px; height: 12px; margin-right: 19px; }
.panel-head .toggle { width: 16px; height: 16px; margin-left: auto; margin-right: 15px; }
.grip { width: 6px; height: 22px; border-left: 2px solid #888; border-right: 2px solid #888; margin-right: 1px; }
.comments { margin-top: auto; padding-left: 48px; }
.tree { list-style: none; margin: 11px 0 0; padding: 0; display: flex; flex-direction: column; gap: 8px; }
.tree li { height: 40px; display: flex; align-items: center; }
.tw { width: 14px; height: 14px; margin-right: 21px; }
.tw.c { height: 20px; }
.root { padding-left: 37px; } .l1 { padding-left: 73px; } .l2 { padding-left: 144px; }
.node { height: 40px; background: #f1f1f1; display: flex; align-items: center; padding-left: 6px; }
.node b { font-weight: 400; font-size: 22px; white-space: nowrap; letter-spacing: .4px; margin: -2px 0 0 28px; }
.root .node { width: 296px; }
.eye { width: 32px; height: 20px; } .eye.off { height: 26px; }
.folder { width: 32px; height: 26px; }
.gear { width: 32px; height: 32px; }
.gear-hole { fill: #f1f1f1; }
.current { width: 196px; height: 32px; margin-left: 12px; background: #999; color: #fff; font-weight: 700; font-size: 22px; letter-spacing: .35px; display: flex; align-items: center; padding-left: 8px; }
.current em { font-style: normal; margin-top: -2px; }
.comp { width: 28px; height: 28px; margin-right: 30px; }
.radio { width: 28px; height: 28px; margin-left: 8px; }
.n-doc { width: 284px; } .n-views { width: 228px; } .n-origin { width: 198px; } .n-bodies { width: 206px; } .n-body1 { width: 198px; } .n-sketches { width: 230px; }
.eye + .folder { margin-left: 18px; } .cyl { width: 32px; height: 28px; margin-left: 18px; }
.navbar { position: absolute; left: 996px; bottom: 12px; width: 506px; height: 48px; background: #f1f1f1; display: flex; align-items: center; padding-left: 7px; }
.na { width: 12px; height: 8px; color: #333; }
.n1, .n3, .n6 { width: 30px; height: 32px; } .n2, .n7 { width: 30px; height: 30px; } .n4, .n5 { width: 31px; height: 31px; } .n8 { width: 30px; height: 28px; }
.a1 { margin: 0 13px 0 11px; } .n3 { margin: 0 22px; } .n5 { margin-left: 21px; } .a2 { margin: 0 29px 0 10px; } .a3 { margin: 0 15px 0 5px; }

/* timeline */
.timeline { height: 100px; border-top: 2px solid #c9c9c9; display: flex; background: #f1f1f1; }
.playback { width: 290px; height: 96px; display: flex; align-items: center; gap: 25px; padding-left: 20px; }
.playback svg { width: 25px; height: 28px; } .playback .play { height: 32px; }
.playback .step { margin: 0 2px 0 -2px; }
.history { width: 460px; padding-top: 30px; }
.features { display: flex; gap: 16px; }
.features svg { width: 32px; height: 32px; }
.rail { width: 434px; height: 14px; margin: 6px 0 0 16px; border-bottom: 4px solid #c8c8c8; display: flex; justify-content: space-between; }
.rail i { width: 4px; height: 10px; background: #c8c8c8; }
.marker { width: 24px; height: 64px; margin-top: 18px; }
.settings { width: 32px; height: 32px; margin: 32px 26px 0 auto; }

/* desktop behind the window */
.strip { position: relative; grid-column: 2; grid-row: 1 / 3; display: flex; flex-direction: column; overflow: hidden; border-left: 1px solid #555; }
.strip i { flex: none; }
.s1 { height: 12px; background: #54656c; } .s2 { height: 78px; background: #8b9595; } .s3 { height: 17px; background: #33322f; } .s4 { height: 131px; background: #5480b7; }
.sky-top { height: 15px; background: #7fbbd6; } .sky { height: 84px; background: #54a8ce; }
.s5 { height: 15px; background: #5b4a3f; } .s6 { height: 122px; background: linear-gradient(#2c2a2a, #4c6ca0 30%, #6088bd 70%, #222); }
.s7 { height: 137px; background: #181613; } .s8 { height: 144px; background: linear-gradient(#151515, #2a2d14 40%, #10120c); }
.frame { height: 7px; background: #ccc; } .s9 { height: 11px; background: #8394a5; } .s10 { height: 58px; background: linear-gradient(#63c0ba, #479fab); }
.s11 { height: 154px; background: #0a0a09; } .s12 { height: 68px; background: #c4c4c4; } .s13 { height: 68px; background: #10131a; }
.frag { position: absolute; left: 0; font: 22px/24px "Liberation Sans", sans-serif; color: #ddd; }
.f1 { top: 137px; } .f2 { top: 373px; } .f3 { top: 609px; } .f4 { top: 844px; left: 3px; } .f5 { top: 1082px; } .f6 { top: 1320px; } .f7 { top: 1349px; }
.dock { grid-column: 1 / 3; grid-row: 2; height: 12px; display: flex; justify-content: space-between; overflow: hidden; background: #1f2128; z-index: 0; }
.file { width: 360px; height: 12px; background: #17191f; border-right: 1px solid #333; display: flex; align-items: flex-end; padding-left: 20px; font: 24px/24px Inter, sans-serif; color: #73747e; }
.file svg { width: 24px; height: 24px; margin-right: 19px; }
.file span { letter-spacing: -.7px; margin-bottom: 1px; }
.scr { width: 38px; background: #0b0b0c; color: #ddd; font: 700 22px/24px "Liberation Sans", sans-serif; margin-top: -8px; height: 26px; z-index: 2; }
```
